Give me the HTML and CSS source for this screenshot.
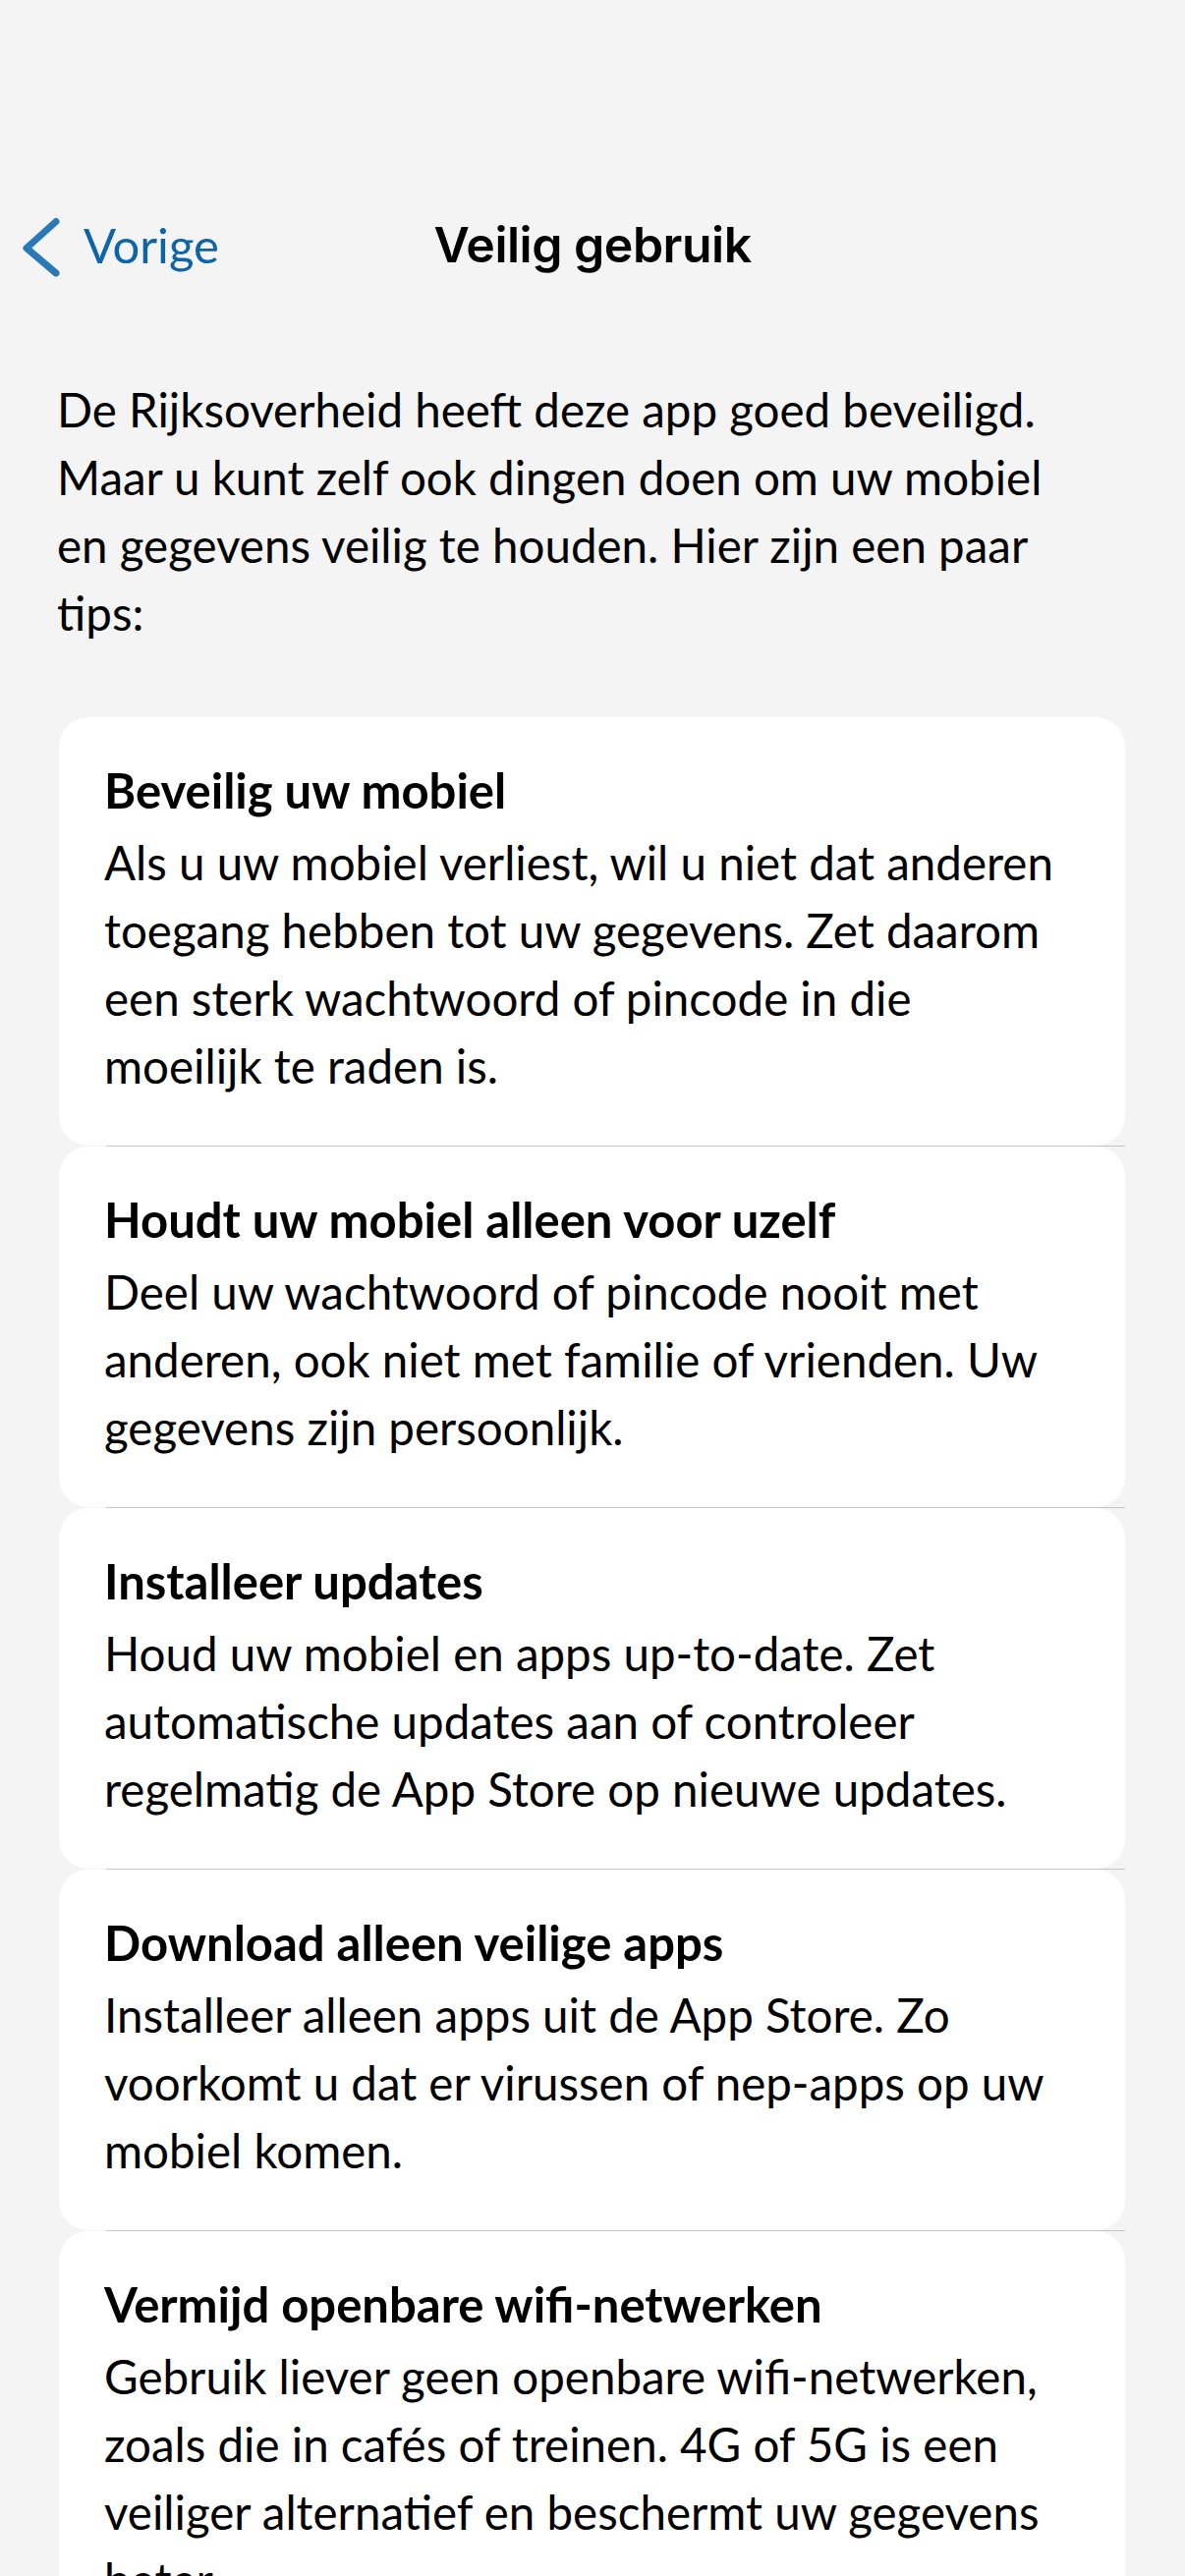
FILE: index.html
```html
<!DOCTYPE html>
<html lang="nl">
<head>
<meta charset="utf-8">
<title>Veilig gebruik</title>
<link rel="stylesheet" href="styles.css">
</head>
<body>
<header class="navbar">
  <a class="back" href="#">
    <svg class="chevron" width="44" height="60" viewBox="0 0 44 60" aria-hidden="true"><path d="M37 6.5 L7 33.5 L37 59"/></svg>
    <span class="back-label">Vorige</span>
  </a>
  <h1 class="title">Veilig gebruik</h1>
  <span class="spacer"></span>
</header>
<main class="content">
  <p class="intro">De Rijksoverheid heeft deze app goed beveiligd. Maar u kunt zelf ook dingen doen om uw mobiel en gegevens veilig te houden. Hier zijn een paar tips:</p>
  <ul class="tips">
    <li class="tip">
      <h2 class="tip-title">Beveilig uw mobiel</h2>
      <p class="tip-text">Als u uw mobiel verliest, wil u niet dat anderen toegang hebben tot uw gegevens. Zet daarom een sterk wachtwoord of pincode in die moeilijk te raden is.</p>
    </li>
    <li class="sep"></li>
    <li class="tip">
      <h2 class="tip-title">Houdt uw mobiel alleen voor uzelf</h2>
      <p class="tip-text">Deel uw wachtwoord of pincode nooit met anderen, ook niet met familie of vrienden. Uw gegevens zijn persoonlijk.</p>
    </li>
    <li class="sep"></li>
    <li class="tip">
      <h2 class="tip-title">Installeer updates</h2>
      <p class="tip-text">Houd uw mobiel en apps up&#8209;to&#8209;date. Zet automatische updates aan of controleer regelmatig de App Store op nieuwe updates.</p>
    </li>
    <li class="sep"></li>
    <li class="tip">
      <h2 class="tip-title">Download alleen veilige apps</h2>
      <p class="tip-text">Installeer alleen apps uit de App Store. Zo voorkomt u dat er virussen of nep&#8209;apps op uw mobiel komen.</p>
    </li>
    <li class="sep"></li>
    <li class="tip">
      <h2 class="tip-title">Vermijd openbare wifi-netwerken</h2>
      <p class="tip-text">Gebruik liever geen openbare wifi&#8209;netwerken, zoals die in cafés of treinen. 4G of 5G is een veiliger alternatief en beschermt uw gegevens beter.</p>
    </li>
  </ul>
</main>
</body>
</html>
```
FILE: styles.css
```css
html, body {
  margin: 0;
  padding: 0;
  background: #f4f4f4;
}
body {
  font-family: Lato, "Open Sans", sans-serif;
  color: #000;
  width: 1206px;
}
.navbar {
  display: grid;
  grid-template-columns: 1fr auto 1fr;
  align-items: center;
  height: 60px;
  padding: 219px 20px 0 20px;
}
.back {
  display: flex;
  align-items: center;
  gap: 21px;
  justify-self: start;
  text-decoration: none;
  color: #0d64a8;
}
.chevron {
  display: block;
  overflow: visible;
}
.chevron path {
  fill: none;
  stroke: #2b78b6;
  stroke-width: 7;
  stroke-linecap: round;
  stroke-linejoin: round;
}
.back-label {
  font-family: Lato, sans-serif;
  font-size: 49px;
  line-height: 60px;
  font-weight: 400;
}
.title {
  margin: 0;
  font-family: Inter, "Liberation Sans", sans-serif;
  font-size: 50px;
  line-height: 60px;
  font-weight: 600;
  letter-spacing: -0.5px;
}
.content {
  padding-top: 103px;
}
.intro {
  margin: 0 118px 0 58px;
  font-size: 47.5px;
  line-height: 69px;
}
.tips {
  list-style: none;
  margin: 72px 61px 0 60px;
  padding: 0;
}
.tip {
  background: #fff;
  border-radius: 30px;
  padding: 40px 56px 47px 46px;
}
.tip-title {
  margin: 0 0 4px;
  font-size: 49px;
  line-height: 69px;
  font-weight: 700;
}
.tip-text {
  margin: 0;
  font-size: 47.5px;
  line-height: 69px;
}
.sep {
  height: 1px;
  margin-left: 48px;
  background: #c4c4c4;
}
```
